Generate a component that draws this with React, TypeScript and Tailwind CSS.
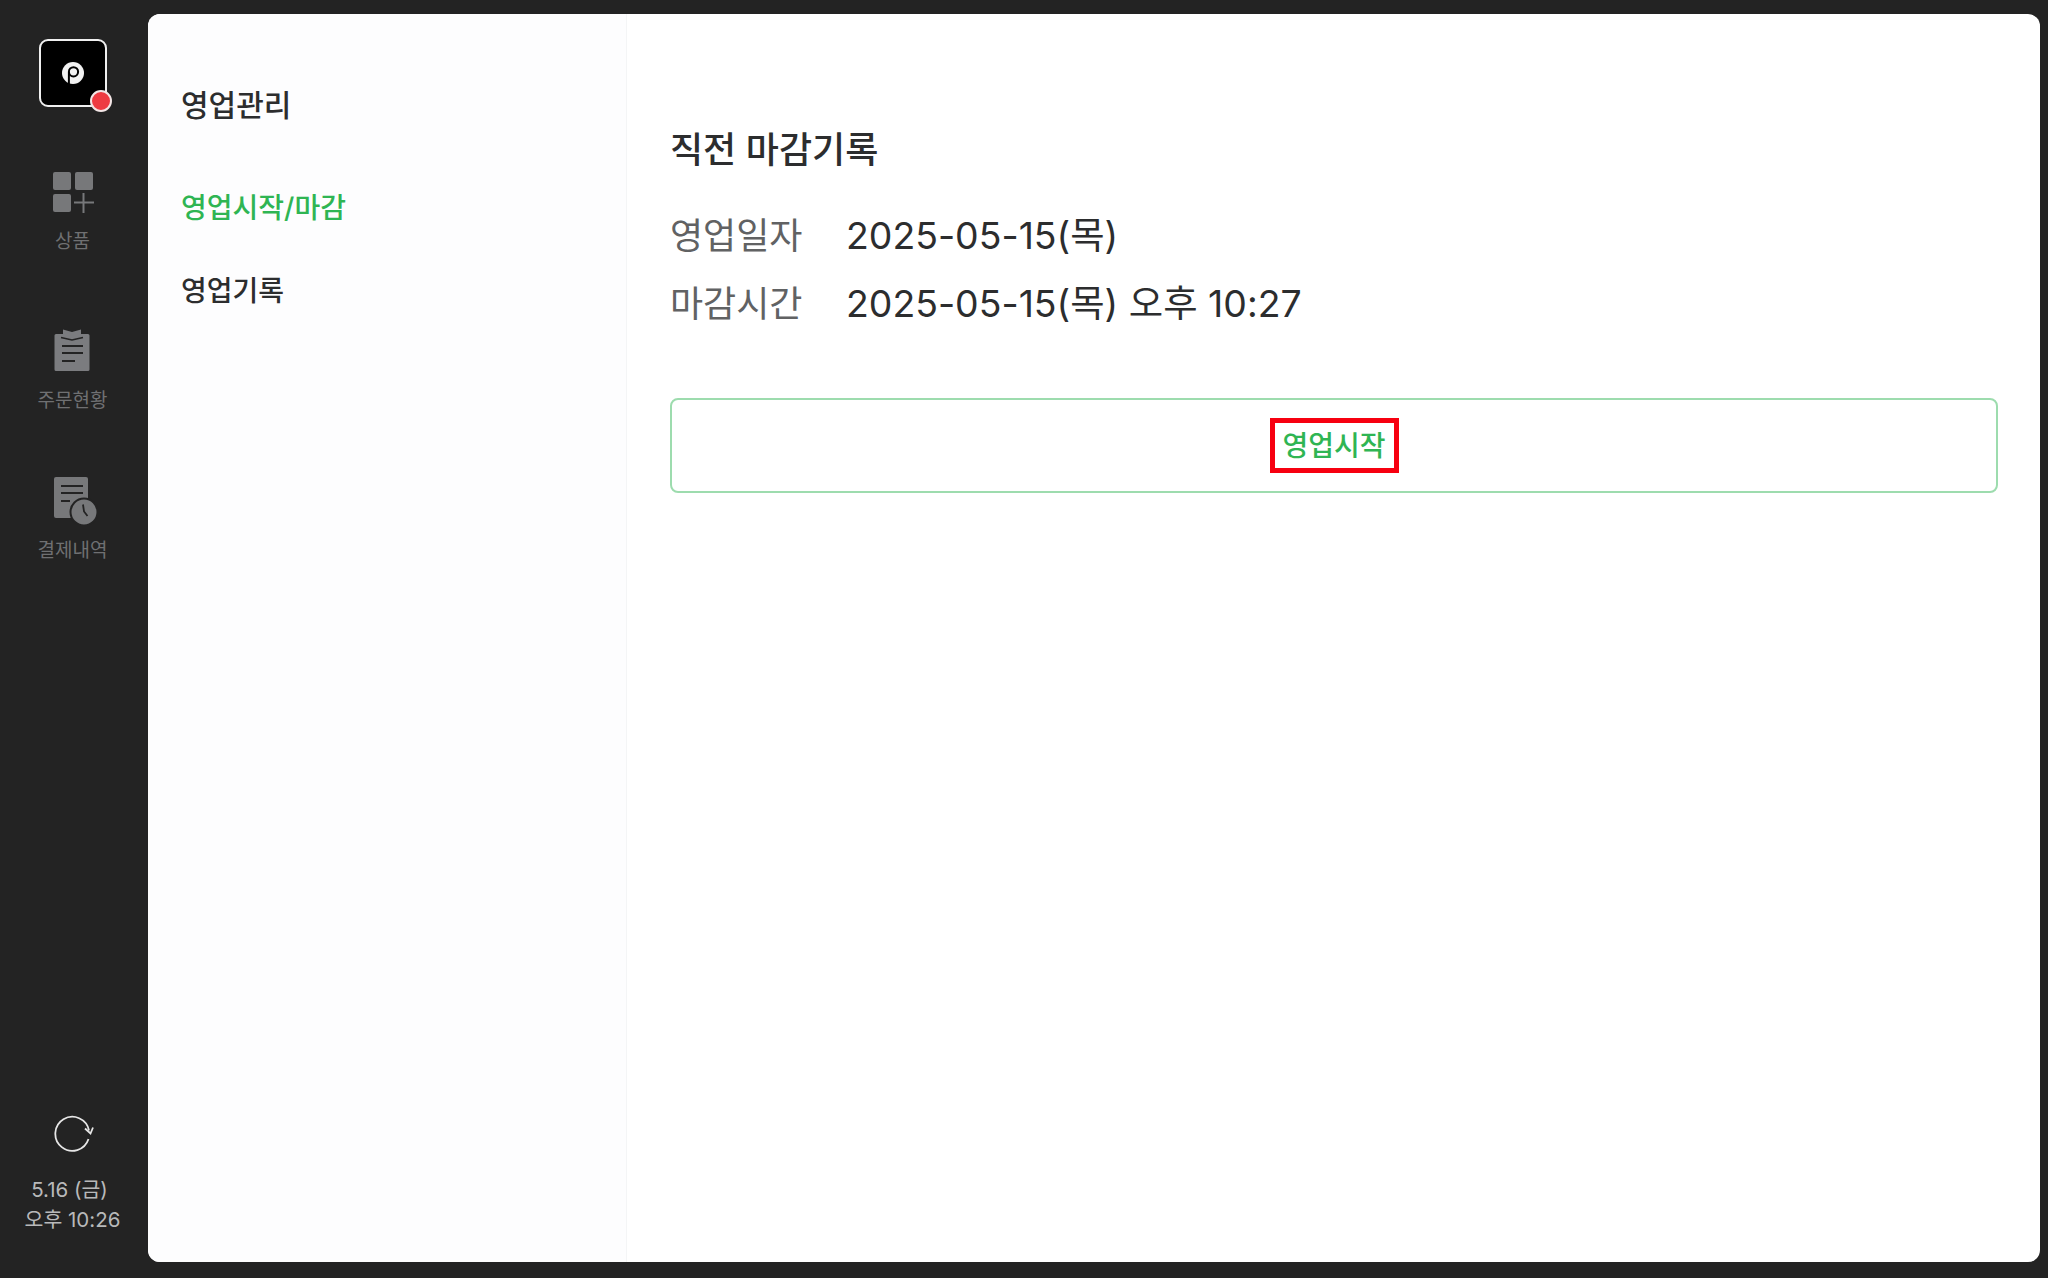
const FONT = "font-['Inter','Noto_Sans_CJK_KR',sans-serif]";

function Logo() {
  return (
    <div className="relative w-[68px] h-[68px] mt-[39px] ml-[-2px] shrink-0 rounded-[9px] border-2 border-[#f0f0f0] bg-black flex items-center justify-center">
      <svg width="24" height="24" viewBox="0 0 24 24" fill="none">
        <circle cx="12" cy="12" r="11" fill="#f2f2f2" />
        <circle cx="12.5" cy="10.8" r="4.6" stroke="#000" strokeWidth="2" />
        <path d="M7.9 10.8V23" stroke="#000" strokeWidth="2" />
      </svg>
      <span className="absolute right-[-7px] bottom-[-7px] w-[22px] h-[22px] rounded-full bg-[#ee3b42] border-2 border-[#f3e6e6]" />
    </div>
  );
}

function ProductIcon() {
  return (
    <svg width="42" height="42" viewBox="0 0 42 42" fill="#77787a">
      <rect x="1" y="1" width="18" height="18" rx="2" />
      <rect x="23" y="1" width="18" height="18" rx="2" />
      <rect x="1" y="23" width="18" height="18" rx="2" />
      <path d="M22 31.5h20M31.5 22v20" stroke="#77787a" strokeWidth="2" fill="none" />
    </svg>
  );
}

function OrdersIcon() {
  return (
    <svg width="36" height="44" viewBox="0 0 36 44">
      <path d="M2 6h7V1.5l9 2.5 9-2.5V6h7a1.5 1.5 0 0 1 1.5 1.5V41.5A1.5 1.5 0 0 1 34 43H2a1.5 1.5 0 0 1-1.5-1.5V7.5A1.5 1.5 0 0 1 2 6z" fill="#7b7c7f" />
      <path d="M7 9.5l11 2.5 11-2.5" stroke="#232323" strokeWidth="1.6" fill="none" />
      <path d="M8 18h21M8 25h21M8 33h13" stroke="#232323" strokeWidth="2" />
    </svg>
  );
}

function PaymentIcon() {
  return (
    <svg className="ml-[7px]" width="44" height="48" viewBox="0 0 44 48">
      <path d="M2 0h30a2 2 0 0 1 2 2v37a2 2 0 0 1-2 2H2a2 2 0 0 1-2-2V2a2 2 0 0 1 2-2z" fill="#77787a" />
      <path d="M7 9h22M7 16h22M7 24h9" stroke="#232323" strokeWidth="2.2" />
      <circle cx="30" cy="35" r="13.5" fill="#77787a" stroke="#232323" strokeWidth="2" />
      <path d="M29 27.5l1 7 3.5 4.5" stroke="#232323" strokeWidth="1.8" fill="none" />
    </svg>
  );
}

function NavItem({ icon, label, className, gap }: { icon: React.ReactNode; label: string; className: string; gap: string }) {
  return (
    <div className={`flex flex-col items-center ${className}`}>
      <div className="h-[48px] flex items-center justify-center">{icon}</div>
      <span className={`${gap} text-[19px] leading-[24px] text-[#6f7072]`}>{label}</span>
    </div>
  );
}

function Sidebar() {
  return (
    <aside className="w-[148px] shrink-0 flex flex-col items-center">
      <Logo />
      <NavItem icon={<ProductIcon />} label="상품" gap="mt-[14px]" className="mt-[61px] ml-[-3px]" />
      <NavItem icon={<OrdersIcon />} label="주문현황" gap="mt-[15px]" className="mt-[72px] ml-[-3px]" />
      <NavItem icon={<PaymentIcon />} label="결제내역" gap="mt-[14px]" className="mt-[64px] ml-[-3px]" />
      <div className="mt-auto mb-[43px] ml-[-3px] flex flex-col items-center">
        <svg className="ml-[4px]" width="40" height="38" viewBox="0 0 40 38" fill="none" stroke="#e6e6e6" strokeWidth="1.8">
          <path d="M34.5 25A17 17 0 1 1 35 16.5" />
          <path d="M31 14.5l5.5 5L39 13.5" />
        </svg>
        <div className="mt-[23px] text-[20.5px] leading-[30px] text-[#b8b9ba] text-center">
          <div className="ml-[-6px]">5.16 (금)</div>
          <div>오후 10:26</div>
        </div>
      </div>
    </aside>
  );
}

function SideMenu() {
  return (
    <nav className="w-[479px] shrink-0 border-r border-[#f4f5f6] bg-[#fdfdfe] pl-[33px] pt-[71px]">
      <h2 className="text-[30px] leading-[40px] font-medium text-[#2c2d2e]">영업관리</h2>
      <div className="mt-[63px] text-[28px] leading-[40px] font-medium text-[#2fb553]">영업시작/마감</div>
      <div className="mt-[43px] text-[28px] leading-[40px] font-medium text-[#2c2d2e]">영업기록</div>
    </nav>
  );
}

function InfoRow({ label, value }: { label: string; value: string }) {
  return (
    <div className="flex items-center h-[68px]">
      <span className="w-[176px] shrink-0 text-[36px] text-[#616263]">{label}</span>
      <span className="text-[37.4px] text-[#2c2d2e]">{value}</span>
    </div>
  );
}

function Content() {
  return (
    <section className="flex-1 min-w-0 pl-[43px] pr-[42px] pt-[110px]">
      <h1 className="text-[36px] leading-[52px] font-medium text-[#2c2d2e]">직전 마감기록</h1>
      <div className="mt-[26px] flex flex-col">
        <InfoRow label="영업일자" value="2025-05-15(목)" />
        <InfoRow label="마감시간" value="2025-05-15(목) 오후 10:27" />
      </div>
      <button className="mt-[60px] w-full h-[95px] rounded-[8px] border-2 border-[#9ddcae] bg-white flex items-center justify-center">
        <span className="w-[129px] h-[55px] border-[5px] border-[#f70010] flex items-center justify-center text-[28px] font-medium text-[#2fb553]">
          영업시작
        </span>
      </button>
    </section>
  );
}

export default function App() {
  return (
    <div className={`h-[1278px] w-[2048px] overflow-hidden bg-[#232323] flex ${FONT}`}>
      <Sidebar />
      <main className="w-[1892px] h-[1248px] mt-[14px] rounded-[12px] bg-white flex overflow-hidden">
        <SideMenu />
        <Content />
      </main>
    </div>
  );
}
